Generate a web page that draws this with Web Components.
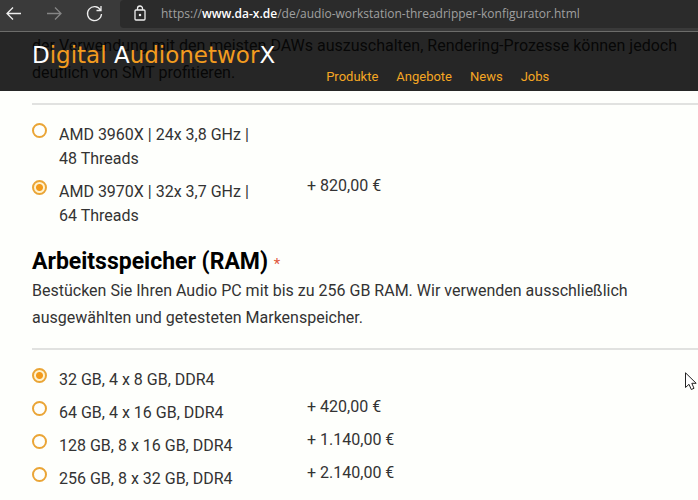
<!DOCTYPE html>
<html lang="de">
<head>
<meta charset="utf-8">
<meta name="viewport" content="width=device-width, initial-scale=1">
<title>Digital AudionetworX</title>
<style>
    body {
        margin: 0;
        background: #fefffc;
        color: #333;
        font-family: Roboto, "Liberation Sans", sans-serif;
        font-size: 16px;
        overflow: hidden;
    }
    main {
        position: relative;
    }
</style>
</head>
<body>
<browser-bar>
    <span>https://<b>www.da-x.de</b>/de/audio-workstation-threadripper-konfigurator.html</span>
</browser-bar>
<main>
    <site-header>
        <a href="#produkte">Produkte</a>
        <a href="#angebote">Angebote</a>
        <a href="#news">News</a>
        <a href="#jobs">Jobs</a>
    </site-header>
    <config-section group="cpu">
        der Verwendung mit den meisten DAWs auszuschalten, Rendering-Prozesse können jedoch deutlich von SMT profitieren.
    </config-section>
    <config-section group="ram" heading="Arbeitsspeicher (RAM)">
        Bestücken Sie Ihren Audio PC mit bis zu 256 GB RAM. Wir verwenden ausschließlich ausgewählten und getesteten Markenspeicher.
    </config-section>
</main>
<mouse-pointer></mouse-pointer>

<script>
const OPTIONS = {
    cpu: [
        { label: 'AMD 3960X | 24x 3,8 GHz | 48 Threads' },
        { label: 'AMD 3970X | 32x 3,7 GHz | 64 Threads', price: '+ 820,00 €', checked: true }
    ],
    ram: [
        { label: '32 GB, 4 x 8 GB, DDR4', checked: true },
        { label: '64 GB, 4 x 16 GB, DDR4', price: '+ 420,00 €' },
        { label: '128 GB, 8 x 16 GB, DDR4', price: '+ 1.140,00 €' },
        { label: '256 GB, 8 x 32 GB, DDR4', price: '+ 2.140,00 €' }
    ]
};

class BrowserBar extends HTMLElement {
    constructor() {
        super();
        this.attachShadow({ mode: 'open' });
        this.shadowRoot.innerHTML = `
            <style>
                :host {
                    display: flex;
                    justify-content: space-between;
                    height: 31px;
                    background: #3a3a3a;
                    border-bottom: 1px solid #6c6c6a;
                    color: #a0a0a0;
                    font: 12px/28px "Open Sans", "Noto Sans", sans-serif;
                }
                .buttons {
                    display: flex;
                    flex: 0 0 120px;
                    align-items: flex-start;
                    gap: 16px;
                    padding-left: 2px;
                    box-sizing: border-box;
                }
                button {
                    width: 24px;
                    height: 28px;
                    padding: 0;
                    border: 0;
                    background: none;
                    color: #eee;
                }
                button:disabled {
                    color: #858585;
                }
                svg {
                    display: block;
                    fill: none;
                    stroke: currentColor;
                    stroke-width: 1.3;
                }
                .address {
                    display: flex;
                    flex: 1;
                    gap: 13px;
                    height: 28px;
                    padding-left: 12px;
                    border-radius: 4px 0 0 4px;
                    background: #2b2b2b;
                    white-space: nowrap;
                    overflow: hidden;
                }
                .address svg {
                    flex: none;
                    color: #eee;
                }
            </style>
            <div class="buttons">
                <button aria-label="Zurück">
                    <svg width="24" height="28"><path d="M19 13.500H5M11 7.500L5 13.500L11 19.500"/></svg>
                </button>
                <button aria-label="Vorwärts" disabled>
                    <svg width="24" height="28"><path d="M5 13.500H19M13 7.500L19 13.500L13 19.500"/></svg>
                </button>
                <button aria-label="Aktualisieren">
                    <svg width="24" height="28"><path d="M18.500 10A7 7 0 1 0 19.500 14M19 6V10.500H14.500"/></svg>
                </button>
            </div>
            <div class="address">
                <svg width="16" height="28"><rect x="3" y="10" width="10" height="10" rx="1"/><path d="M5.500 10V8.500a2.500 2.500 0 0 1 5 0V10"/><circle cx="8" cy="15" r=".6" fill="currentColor"/></svg>
                <slot></slot>
            </div>
        `;
    }

    connectedCallback() {
        const host = this.querySelector('b');
        if (host) {
            host.style.fontWeight = '600';
            host.style.color = '#fff';
        }
    }
}

class SiteHeader extends HTMLElement {
    constructor() {
        super();
        this.attachShadow({ mode: 'open' });
        this.shadowRoot.innerHTML = `
            <style>
                :host {
                    position: absolute;
                    top: 0;
                    left: 0;
                    right: 0;
                    z-index: 1;
                    display: flex;
                    gap: 51px;
                    height: 59px;
                    padding: 0 32px;
                    background: rgba(0, 0, 0, 0.85);
                }
                .logo {
                    margin-top: 8px;
                    color: #f39c1f;
                    font: 23px/30px "DejaVu Sans", sans-serif;
                    text-decoration: none;
                    white-space: nowrap;
                }
                .logo span {
                    color: #fff;
                }
                nav {
                    display: flex;
                    align-items: flex-end;
                    gap: 18px;
                    padding-bottom: 4px;
                }
                ::slotted(a) {
                    color: #f5a623;
                    font-size: 13px;
                    line-height: 20px;
                    text-decoration: none;
                }
            </style>
            <a class="logo" href="#"><span>D</span>igital <span>A</span>udionetwor<span>X</span></a>
            <nav><slot></slot></nav>
        `;
    }
}

class ConfigSection extends HTMLElement {
    constructor() {
        super();
        this.attachShadow({ mode: 'open' });
    }

    connectedCallback() {
        const group = this.getAttribute('group');
        const heading = this.getAttribute('heading');
        const rows = OPTIONS[group].map((option, i) => `
            <div class="row">
                <input type="radio" name="${group}" id="${group}-${i}" ${option.checked ? 'checked' : ''}>
                <label for="${group}-${i}">${option.label}</label>
                <span class="price">${option.price || ''}</span>
            </div>
        `).join('');

        this.shadowRoot.innerHTML = `
            <style>
                :host {
                    display: block;
                    padding-left: 32px;
                }
                h2 {
                    margin: 0;
                    padding-top: 12px;
                    color: #000;
                    font-size: 23px;
                    font-weight: 700;
                    line-height: 25px;
                }
                h2 span {
                    color: #e0583c;
                    font-size: 15px;
                    font-weight: 400;
                }
                p {
                    margin: 0;
                    padding-right: 16px;
                    line-height: 27px;
                }
                .options {
                    margin-top: 17px;
                    padding-top: 18px;
                    border-top: 2px solid #e1e2e0;
                }
                .row {
                    display: grid;
                    grid-template-columns: 15px 208px 1fr;
                    column-gap: 12px;
                    align-items: start;
                    margin-bottom: 9px;
                }
                .price {
                    margin-left: 28px;
                    line-height: 12px;
                }
                label {
                    line-height: 24px;
                }
                input {
                    appearance: none;
                    box-sizing: border-box;
                    width: 15px;
                    height: 15px;
                    margin: 0;
                    border: 2px solid #eaa536;
                    border-radius: 50%;
                }
                input:checked {
                    background: radial-gradient(circle, #f39a1a 3px, #fff3cf 4px);
                }
            </style>
            ${heading ? `<h2>${heading} <span>*</span></h2>` : ''}
            <p><slot></slot></p>
            <div class="options" role="radiogroup" aria-label="${heading || 'Prozessor'}">${rows}</div>
        `;
    }
}

class MousePointer extends HTMLElement {
    constructor() {
        super();
        this.attachShadow({ mode: 'open' });
        this.shadowRoot.innerHTML = `
            <style>
                :host {
                    position: absolute;
                    top: 372px;
                    right: 1px;
                    pointer-events: none;
                }
                svg {
                    display: block;
                }
            </style>
            <svg width="12" height="19"><path d="M.5 .8V15.500L4 12.300L6.300 17.500L9 16.300L6.800 11.300H11.200Z" fill="#fff" stroke="#222"/></svg>
        `;
    }
}

customElements.define('browser-bar', BrowserBar);
customElements.define('site-header', SiteHeader);
customElements.define('config-section', ConfigSection);
customElements.define('mouse-pointer', MousePointer);
</script>
</body>
</html>
